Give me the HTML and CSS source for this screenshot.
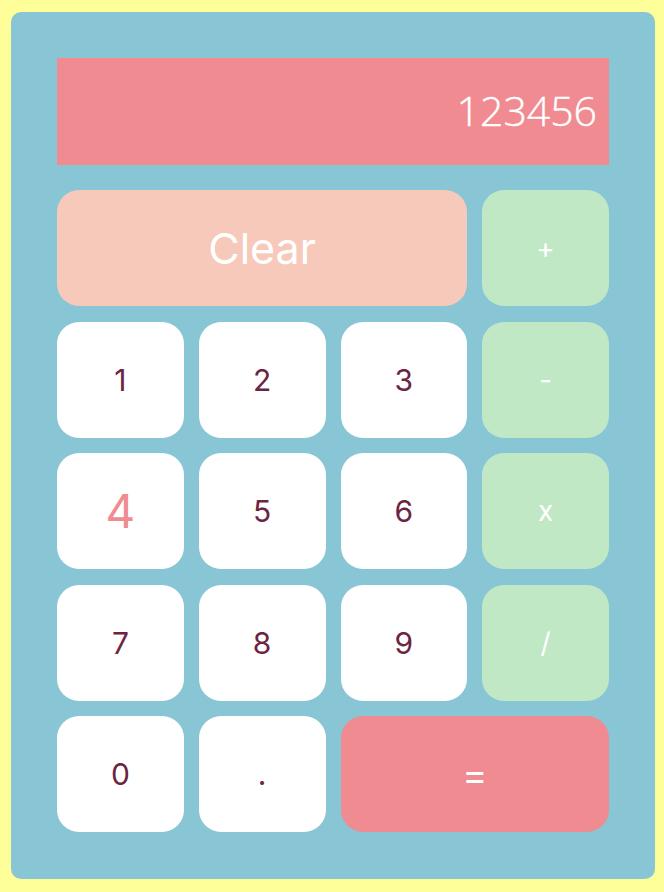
FILE: index.html
```html
<!DOCTYPE html>
<html>
<head>
<meta charset="utf-8">
<link rel="stylesheet" href="styles.css">
</head>
<body>
<div class="calc">
  <div class="display">123456</div>
  <div class="keys">
    <button class="key clear">Clear</button>
    <button class="key op">+</button>
    <button class="key num">1</button>
    <button class="key num">2</button>
    <button class="key num">3</button>
    <button class="key op">-</button>
    <button class="key num hot">4</button>
    <button class="key num">5</button>
    <button class="key num">6</button>
    <button class="key op">x</button>
    <button class="key num">7</button>
    <button class="key num">8</button>
    <button class="key num">9</button>
    <button class="key op">/</button>
    <button class="key num">0</button>
    <button class="key num">.</button>
    <button class="key equals">=</button>
  </div>
</div>
</body>
</html>
```
FILE: styles.css
```css
html, body {
  margin: 0;
  padding: 0;
  background: #ffff99;
}
body {
  padding: 12px 9px 13px 11px;
  font-family: Inter, "Liberation Sans", sans-serif;
}
.calc {
  width: 644px;
  height: 867px;
  box-sizing: border-box;
  background: #89c6d5;
  border-radius: 10px;
  padding: 46px;
}
.display {
  height: 107px;
  box-sizing: border-box;
  background: #f08b91;
  color: #fff;
  font-family: "Open Sans", sans-serif;
  font-weight: 300;
  font-size: 41px;
  display: flex;
  align-items: center;
  justify-content: flex-end;
  padding-right: 12px;
  padding-bottom: 4px;
  margin-bottom: 25px;
  -webkit-text-stroke: 0.4px #fff;
}
.keys {
  display: grid;
  grid-template-columns: repeat(4, 1fr);
  grid-template-rows: repeat(5, 116px);
  column-gap: 15px;
  row-gap: 15.5px;
}
.key {
  border: none;
  border-radius: 22px;
  font-family: Inter, "Liberation Sans", sans-serif;
  padding: 0;
  cursor: pointer;
}
.num {
  background: #fff;
  color: #6b2441;
  font-size: 30px;
}
.hot {
  color: #f08b91;
  font-size: 46px;
}
.op {
  background: #c1e8c4;
  color: #fff;
  font-size: 28px;
}
.clear {
  grid-column: span 3;
  background: #f6c9bb;
  color: #fff;
  font-size: 43px;
}
.equals {
  grid-column: span 2;
  background: #f08b91;
  color: #fff;
  font-size: 38px;
}
```
